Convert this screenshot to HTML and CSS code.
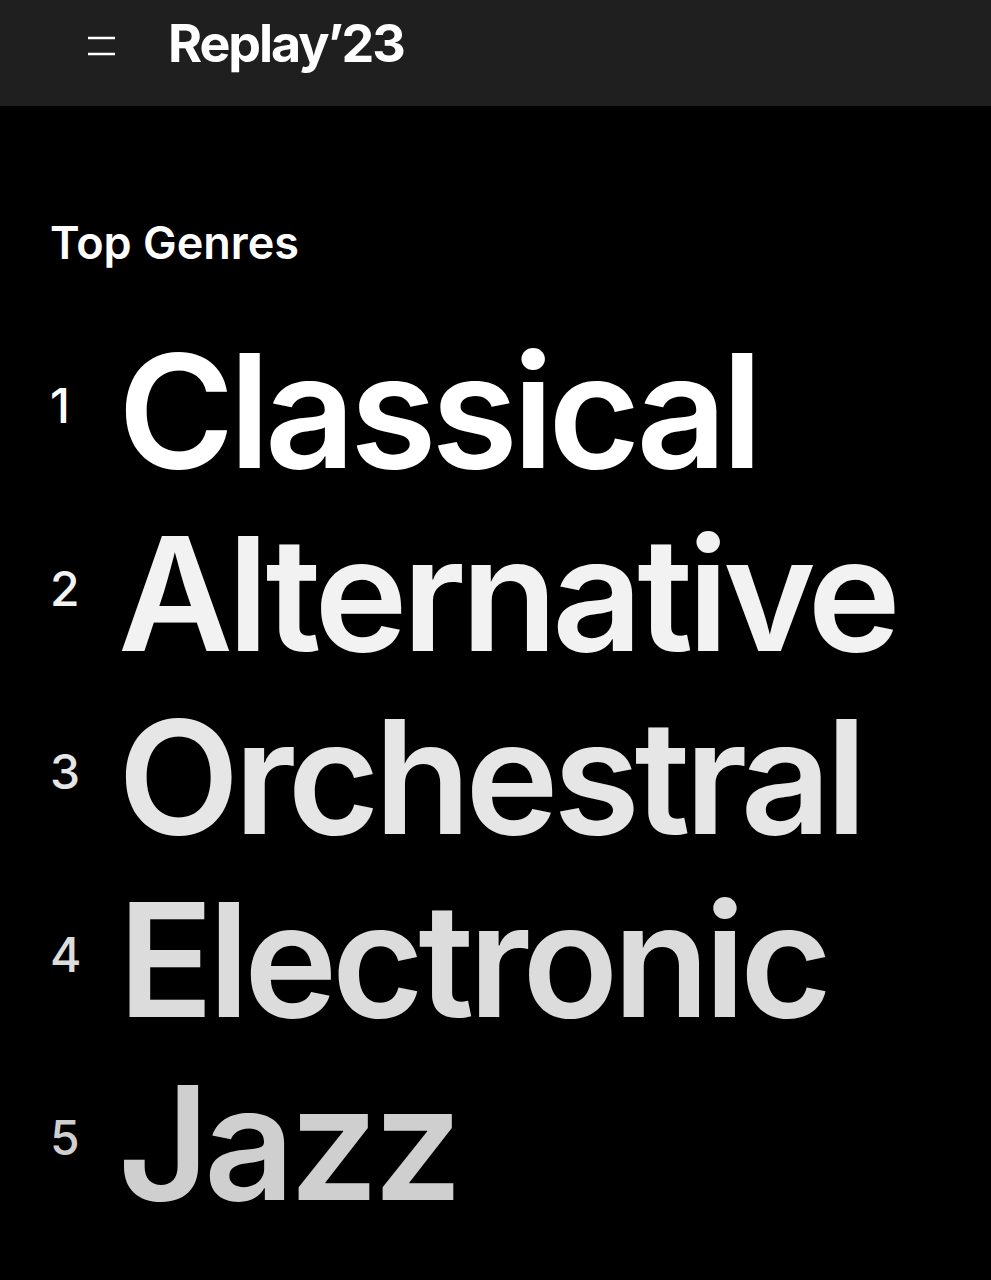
FILE: index.html
```html
<!DOCTYPE html>
<html lang="en">
<head>
<meta charset="utf-8">
<title>Replay'23</title>
<link rel="stylesheet" href="styles.css">
</head>
<body>
<header class="topbar">
  <button class="menu" aria-label="Menu">
    <svg width="28" height="20" viewBox="0 0 28 20"><line x1="0" y1="2" x2="27" y2="2" stroke="#fff" stroke-width="2.5"/><line x1="0" y1="18" x2="27" y2="18" stroke="#fff" stroke-width="2.5"/></svg>
  </button>
  <h1 class="logo">Replay’23</h1>
</header>
<main class="content">
  <h2 class="section-title">Top Genres</h2>
  <ol class="genres">
    <li class="genre g1"><span class="rank">1</span><span class="name">Classical</span></li>
    <li class="genre g2"><span class="rank">2</span><span class="name">Alternative</span></li>
    <li class="genre g3"><span class="rank">3</span><span class="name">Orchestral</span></li>
    <li class="genre g4"><span class="rank">4</span><span class="name">Electronic</span></li>
    <li class="genre g5"><span class="rank">5</span><span class="name">Jazz</span></li>
  </ol>
</main>
</body>
</html>
```
FILE: styles.css
```css
* { box-sizing: border-box; }
html, body { margin: 0; padding: 0; }
body {
  background: #000;
  color: #fff;
  font-family: Inter, "Noto Sans", "Liberation Sans", sans-serif;
  width: 991px;
  height: 1280px;
  overflow: hidden;
}
.topbar {
  height: 106px;
  background: #1f1f1f;
  display: flex;
  align-items: flex-start;
  padding: 18px 0 0 88px;
}
.menu {
  background: none;
  border: 0;
  padding: 0;
  margin: 18px 0 0 0;
  width: 28px;
  height: 20px;
  display: block;
}
.menu svg { display: block; }
.logo {
  margin: 0 0 0 52px;
  font-size: 52px;
  line-height: 1;
  font-weight: 700;
  letter-spacing: -0.04em;
  color: #fff;
}
.content {
  padding: 114px 0 0 50px;
}
.section-title {
  margin: 0;
  font-size: 45px;
  line-height: 1;
  font-weight: 600;
  letter-spacing: 0;
}
.genres {
  list-style: none;
  margin: 67px 0 0 0;
  padding: 0;
  display: flex;
  flex-direction: column;
  gap: 25px;
}
.genre {
  display: flex;
  align-items: flex-start;
}
.rank {
  width: 68px;
  flex: none;
  padding-top: 50px;
  font-size: 48px;
  line-height: 1;
  font-weight: 500;
}
.name {
  font-size: 158px;
  line-height: 1;
  font-weight: 600;
  letter-spacing: -0.035em;
}
.g1 { color: #ffffff; }
.g2 { color: #f2f2f2; }
.g3 { color: #e6e6e6; }
.g4 { color: #dcdcdc; }
.g5 { color: #cfcfcf; }
```
